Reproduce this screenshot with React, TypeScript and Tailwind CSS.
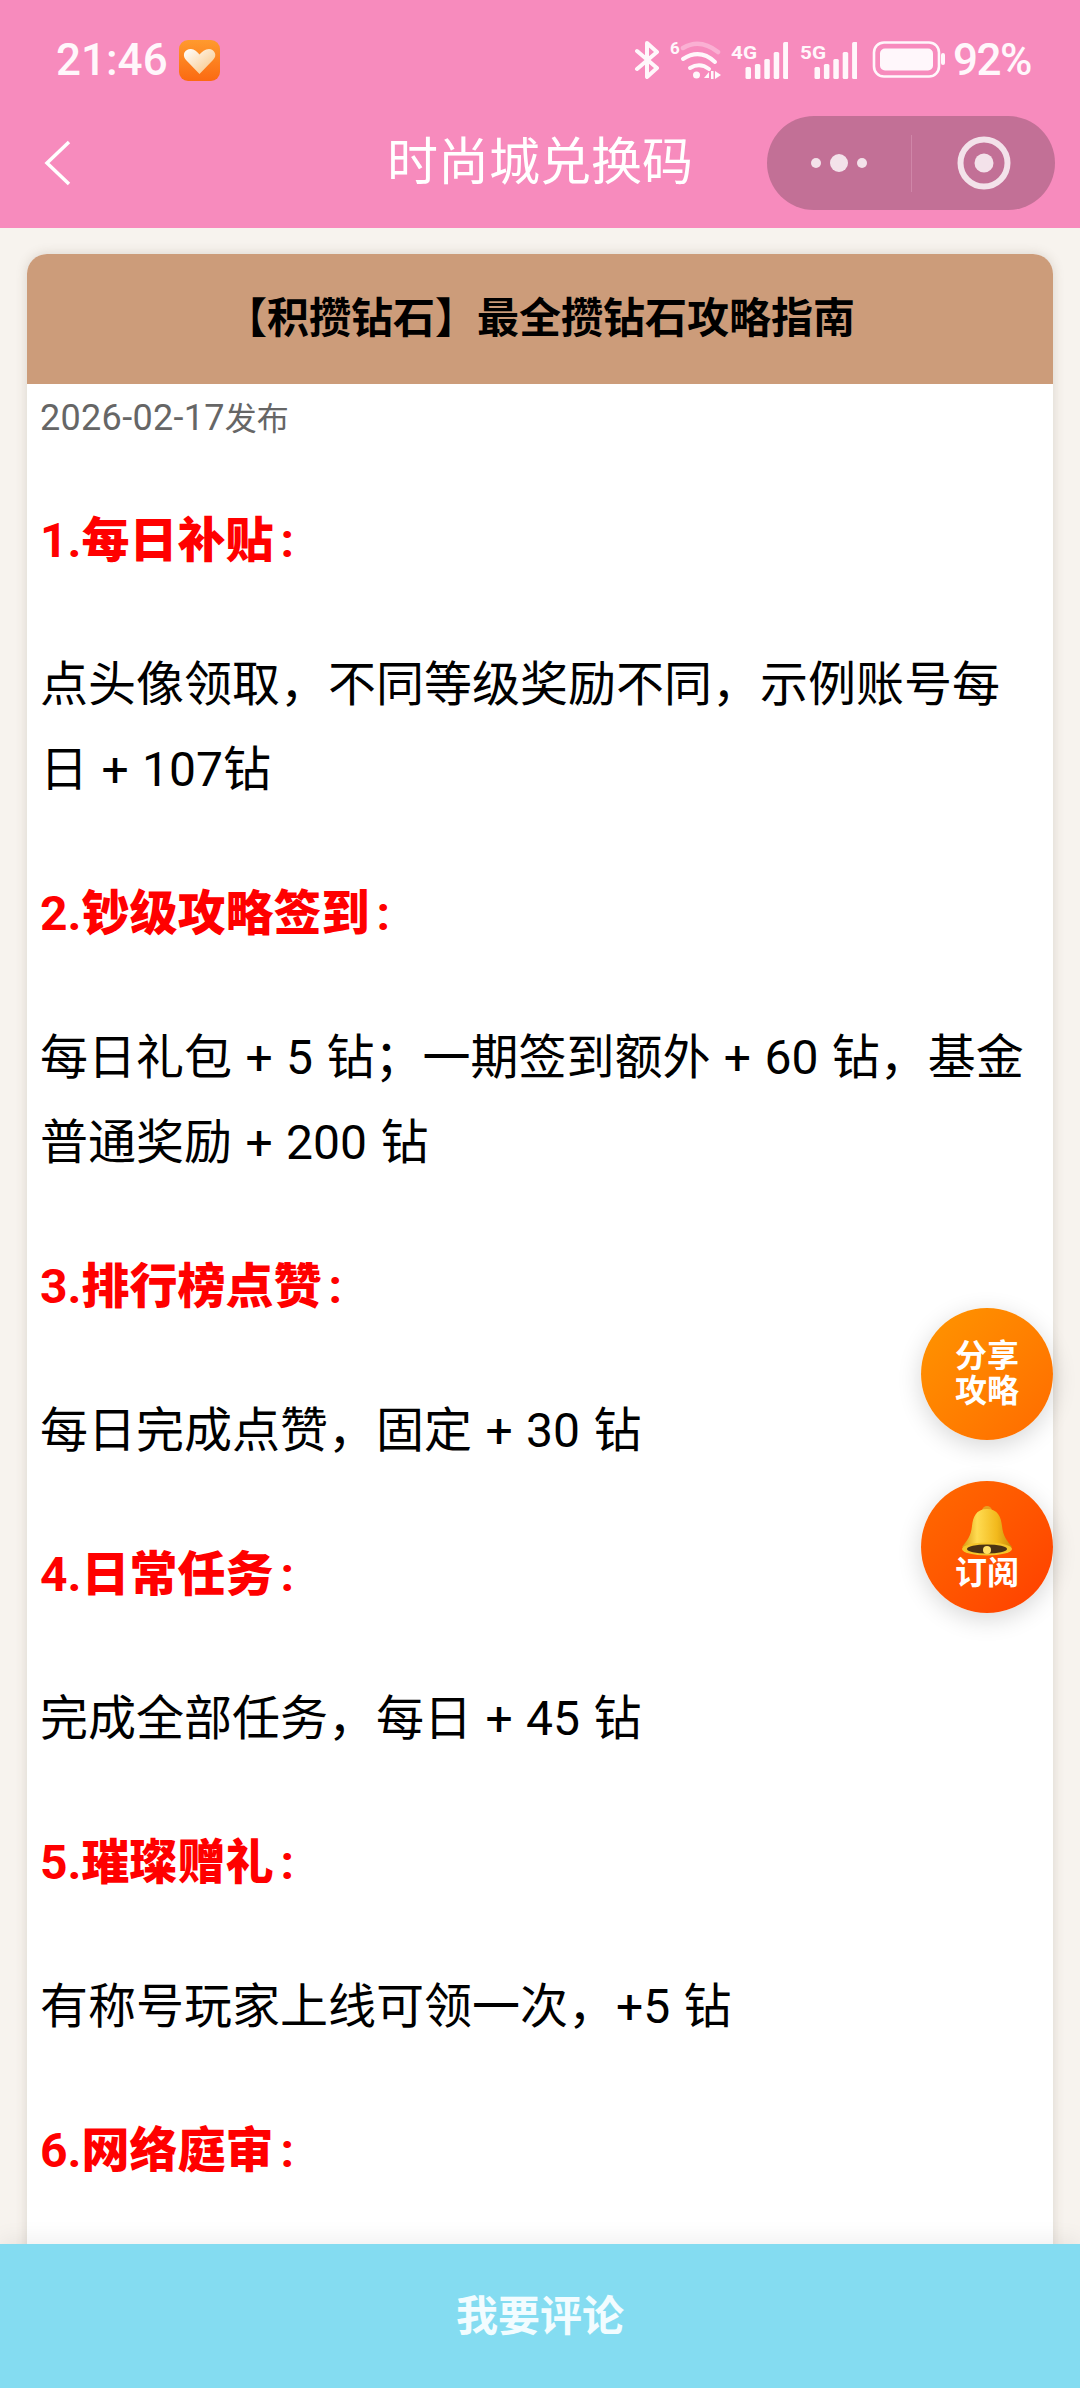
const font = { fontFamily: '"Roboto", "Noto Sans CJK SC", sans-serif' };

function Heading({ num, children }: { num: string; children: React.ReactNode }) {
  return (
    <p className="text-[48px] leading-[85px] font-black text-[#ff0000] mb-[59px]">
      <span className="font-bold">{num}</span>
      {children}
      <span className="ml-[7px] font-bold">:</span>
    </p>
  );
}

function Body({ children }: { children: React.ReactNode }) {
  return <p className="text-[48px] leading-[85px] text-black mb-[59px] [word-spacing:1.5px]">{children}</p>;
}

function Bluetooth() {
  return (
    <svg width="26" height="38" viewBox="0 0 26 38" fill="none" stroke="#fff7fb" strokeWidth="4" strokeLinejoin="round" strokeLinecap="round">
      <path d="M3 10 L23 27 L13 36 V2 L23 11 L3 28" />
    </svg>
  );
}

function Wifi() {
  return (
    <svg width="56" height="46" viewBox="0 -4 56 46" fill="none" strokeLinecap="round">
      <text x="2" y="13" fill="#fff7fb" fontSize="17" fontWeight="700" fontFamily="Roboto, sans-serif">6</text>
      <path d="M15 7 Q32 -3 50 11" stroke="#fff7fb" strokeOpacity="0.35" strokeWidth="4.5" />
      <path d="M15 18 Q32 7 47 21" stroke="#fff7fb" strokeWidth="4" />
      <path d="M22 27 Q32 21 41 28" stroke="#fff7fb" strokeWidth="4" />
      <circle cx="28.5" cy="34" r="3.5" fill="#fff7fb" />
      <path d="M41 31 V37 H36 Z" fill="#fff7fb" />
      <rect x="43" y="30" width="2.5" height="8" fill="#fff7fb" />
      <path d="M47 30 L53 34 L47 38 Z" fill="#fff7fb" />
    </svg>
  );
}

function Signal({ label }: { label: string }) {
  const heights = [12, 15, 20, 27, 37];
  return (
    <svg width="57" height="38" viewBox="0 0 57 38">
      <text x="0" y="18" fill="#fff7fb" fontSize="19" fontWeight="700" fontFamily="Roboto, sans-serif" textLength="26" lengthAdjust="spacingAndGlyphs">{label}</text>
      {heights.map((h, i) => (
        <rect key={i} x={14.5 + i * 9.4} y={38 - h} width="5.5" height={h} rx="1.5" fill="#fff7fb" />
      ))}
    </svg>
  );
}

function Battery() {
  return (
    <svg width="74" height="38" viewBox="0 0 74 38">
      <rect x="2" y="1.5" width="65" height="34" rx="10" fill="none" stroke="#fff7fb" strokeWidth="2.6" />
      <rect x="8" y="7.5" width="53" height="22" rx="5" fill="#fff7fb" />
      <rect x="69" y="12" width="4" height="12" rx="2" fill="#fff7fb" />
    </svg>
  );
}

function HeartApp() {
  return (
    <svg width="41" height="41" viewBox="0 0 41 41">
      <defs>
        <linearGradient id="hbg" x1="0" y1="0" x2="0" y2="1">
          <stop offset="0" stopColor="#ff9a2e" />
          <stop offset="1" stopColor="#fb6a12" />
        </linearGradient>
        <linearGradient id="hh" x1="0" y1="0" x2="1" y2="1">
          <stop offset="0" stopColor="#fff" />
          <stop offset="1" stopColor="#f8c27c" />
        </linearGradient>
      </defs>
      <rect width="41" height="41" rx="9" fill="url(#hbg)" />
      <path d="M20.5 34 L7 20 C2 14 7 8.5 12 9 C15.5 9.3 18 11.5 20.5 14.5 C23 11.5 26 9 30 9 C35 9 39 15 34 20 Z" fill="url(#hh)" />
    </svg>
  );
}

function Bell() {
  return (
    <svg width="52" height="50" viewBox="0 0 52 50">
      <defs>
        <linearGradient id="bell" x1="0" y1="0" x2="1" y2="0">
          <stop offset="0" stopColor="#d99a10" />
          <stop offset="0.3" stopColor="#ffdc52" />
          <stop offset="0.7" stopColor="#f2b91c" />
          <stop offset="1" stopColor="#c98a0a" />
        </linearGradient>
      </defs>
      <circle cx="26" cy="5" r="5" fill="#e8a020" />
      <path d="M26 3 C15 3 12 11 11 20 C10 30 6 35 1 41 H51 C46 35 42 30 41 20 C40 11 37 3 26 3 Z" fill="url(#bell)" />
      <ellipse cx="26" cy="43" rx="25" ry="6.5" fill="#f5c52a" />
      <ellipse cx="26" cy="43" rx="20" ry="4.5" fill="#4b3214" />
      <circle cx="26" cy="44" r="4" fill="#ffe066" />
    </svg>
  );
}

export default function App() {
  return (
    <div className="relative w-[1080px] h-[2388px] flex flex-col overflow-hidden bg-[#f7f3ee]" style={font}>
      <header className="h-[228px] shrink-0 bg-[#f78bbd] text-white flex flex-col">
        <div className="h-[116px] shrink-0 flex items-center justify-between pl-[56px] pr-[49px] pt-[4px]">
          <div className="flex items-center gap-[11px]">
            <span className="text-[44px] font-medium leading-none text-[#fff7fb]">21:46</span>
            <HeartApp />
          </div>
          <div className="flex items-center">
            <Bluetooth />
            <span className="w-[8px]" />
            <Wifi />
            <span className="w-[7px]" />
            <Signal label="4G" />
            <span className="w-[12px]" />
            <Signal label="5G" />
            <span className="w-[15px]" />
            <Battery />
            <span className="w-[7px]" />
            <span className="text-[44px] font-medium leading-none tracking-[-1.5px] text-[#fff7fb]">92%</span>
          </div>
        </div>
        <div className="relative h-[94px] shrink-0 flex items-center justify-between pl-[44px] pr-[25px]">
          <svg width="28" height="46" viewBox="0 0 28 46" fill="none" stroke="white" strokeWidth="3.5">
            <path d="M25 2 L3 23 L25 44" />
          </svg>
          <h1 className="absolute inset-x-0 text-center text-[51px] font-normal leading-[94px]">时尚城兑换码</h1>
          <div className="relative w-[288px] h-[94px] rounded-full bg-[#c27096] flex items-center">
            <div className="w-[144px] flex justify-center">
              <svg width="60" height="20" viewBox="0 0 60 20" fill="#f3e2ea">
                <circle cx="7" cy="10" r="5" />
                <circle cx="30" cy="10" r="9" />
                <circle cx="53" cy="10" r="5" />
              </svg>
            </div>
            <div className="w-px h-[57px] bg-[#cf86a8]" />
            <div className="flex-1 flex justify-center">
              <svg width="54" height="54" viewBox="0 0 54 54" fill="none">
                <circle cx="27" cy="27" r="23.5" stroke="#f3e2ea" strokeWidth="6" />
                <circle cx="27" cy="27" r="9.5" fill="#f3e2ea" />
              </svg>
            </div>
          </div>
        </div>
      </header>

      <main className="flex-1 min-h-0 overflow-hidden pt-[26px] px-[27px]">
        <article className="bg-white rounded-t-[20px] shadow-[0_0_12px_rgba(90,70,50,0.18)] h-[2200px]">
          <div className="h-[130px] bg-[#cc9c7a] rounded-t-[20px] flex items-center justify-center">
            <h2 className="text-[42px] font-semibold text-black leading-none">【积攒钻石】最全攒钻石攻略指南</h2>
          </div>
          <div className="px-[13px] pt-[11px]">
            <p className="text-[32px] h-[48px] leading-[48px] text-[#666666] mb-[55px]">
              <span className="text-[36px] leading-none tracking-[0.3px]">2026-02-17</span>发布
            </p>
            <Heading num="1.">每日补贴</Heading>
            <Body>点头像领取，不同等级奖励不同，示例账号每日 + 107钻</Body>
            <Heading num="2.">钞级攻略签到</Heading>
            <Body>每日礼包 + 5 钻；一期签到额外 + 60 钻，基金普通奖励 + 200 钻</Body>
            <Heading num="3.">排行榜点赞</Heading>
            <Body>每日完成点赞，固定 + 30 钻</Body>
            <Heading num="4.">日常任务</Heading>
            <Body>完成全部任务，每日 + 45 钻</Body>
            <Heading num="5.">璀璨赠礼</Heading>
            <Body>有称号玩家上线可领一次，+5 钻</Body>
            <Heading num="6.">网络庭审</Heading>
          </div>
        </article>
      </main>

      <footer className="relative h-[144px] shrink-0 bg-[#84dcf1] shadow-[0_-6px_20px_rgba(0,0,0,0.06)] flex items-center justify-center">
        <span className="text-[42px] font-bold text-[#f2fcff]">我要评论</span>
      </footer>

      <button className="absolute left-[921px] top-[1308px] w-[132px] h-[132px] rounded-full bg-gradient-to-br from-[#ff9500] to-[#ff6a00] shadow-[0_6px_24px_rgba(0,0,0,0.16)] text-white text-[32px] font-bold leading-[35px] flex items-center justify-center text-center">
        分享<br />攻略
      </button>
      <button className="absolute left-[921px] top-[1481px] w-[132px] h-[132px] rounded-full bg-gradient-to-br from-[#ff6a00] to-[#ff3d00] shadow-[0_6px_24px_rgba(0,0,0,0.16)] text-white text-[32px] font-bold leading-[35px] flex flex-col items-center pt-[25px]">
        <Bell />
        <span>订阅</span>
      </button>
    </div>
  );
}
